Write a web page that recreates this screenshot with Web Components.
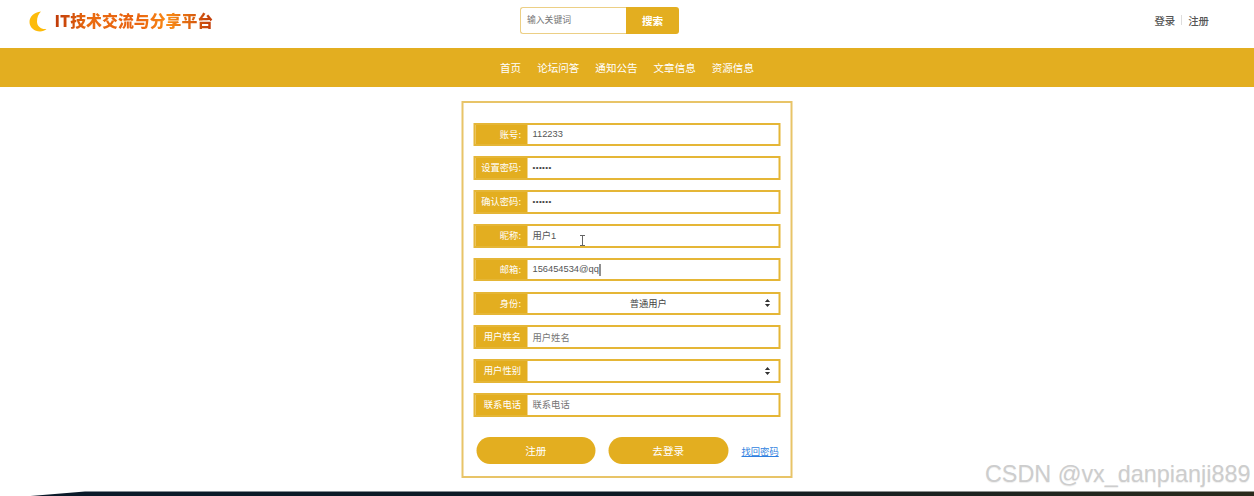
<!DOCTYPE html>
<html lang="zh">
<head>
<meta charset="utf-8">
<title>IT技术交流与分享平台</title>
<style>
  html, body { margin: 0; height: 496px; overflow: hidden; background: #fff; }
  body { font-family: "Liberation Sans", "Noto Sans CJK SC", sans-serif; position: relative; }
</style>
</head>
<body>
<site-header></site-header>
<site-nav>
  <a>首页</a><a>论坛问答</a><a>通知公告</a><a>文章信息</a><a>资源信息</a>
</site-nav>
<reg-form>
  <form-row label="账号:" value="112233"></form-row>
  <form-row label="设置密码:" value="••••••" kind="password"></form-row>
  <form-row label="确认密码:" value="••••••" kind="password"></form-row>
  <form-row label="昵称:" value="用户1" kind="hover"></form-row>
  <form-row label="邮箱:" value="156454534@qq" kind="caret"></form-row>
  <form-row label="身份:" value="普通用户" kind="select"></form-row>
  <form-row label="用户姓名" placeholder="用户姓名"></form-row>
  <form-row label="用户性别" kind="select"></form-row>
  <form-row label="联系电话" placeholder="联系电话"></form-row>
  <pill-button slot="actions">注册</pill-button>
  <pill-button slot="actions">去登录</pill-button>
  <a slot="actions" class="back">找回密码</a>
</reg-form>
<site-footer></site-footer>
<water-mark></water-mark>

<script>
const GOLD = '#e3ae20';

class SiteHeader extends HTMLElement {
    constructor() {
        super();
        this.attachShadow({mode: 'open'}).innerHTML = `
        <style>
        :host { display: flex; align-items: center; height: 47.6px; padding: 0 45px 0 29px; color: #333; }
        .logo { flex: 0 0 491px; display: flex; align-items: center; gap: 7.5px; height: 100%; }
        .logo svg { display: block; margin-top: -5px; }
        .logo b {
            font: 800 15.9px "Noto Sans CJK SC", sans-serif; line-height: 20px;
            background: linear-gradient(90deg, #bf3a08 0%, #ea6c10 22%, #e8610f 50%, #f98b16 72%, #c03c0a 100%);
            -webkit-background-clip: text; background-clip: text; color: transparent;
            margin-top: -5px;
        }
        .search { display: flex; height: 27px; margin-top: -6px; font-family: "Noto Sans CJK SC", sans-serif; }
        .search span {
            box-sizing: border-box; width: 106px; padding-left: 6px; line-height: 24px;
            font-size: 8.8px; color: #757575; border: 1px solid #eccf85; border-right: 0; border-radius: 3px 0 0 3px;
        }
        .search button {
            width: 53px; border: 0; padding: 0; background: ${GOLD}; color: #fff; font: 700 10.6px "Noto Sans CJK SC", sans-serif;
            border-radius: 0 3px 3px 0;
        }
        .user { margin-left: auto; margin-top: -7px; display: flex; align-items: center; font: 500 10.4px "Noto Sans CJK SC", sans-serif; color: #555; }
        .user i { width: 1px; height: 10px; background: #ddd; margin: 0 6px; }
        </style>
        <div class="logo">
            <svg width="18" height="21" viewBox="0 0 18 21">
                <path d="M12 0.5C5 1.5 0.5 5.5 0.5 11C0.5 16.5 5.5 20.5 11 20.5C13.5 20.5 16 19.5 17.5 18C11.5 18.5 8 15 8 10.5C8 6 9.5 3 12 0.5Z" fill="#fdbb0a"/>
            </svg>
            <b>IT技术交流与分享平台</b>
        </div>
        <div class="search"><span>输入关键词</span><button>搜索</button></div>
        <div class="user"><span>登录</span><i></i><span>注册</span></div>
        `;
    }
}
customElements.define('site-header', SiteHeader);

class SiteNav extends HTMLElement {
    constructor() {
        super();
        this.attachShadow({mode: 'open'}).innerHTML = `
        <style>
        :host {
            display: flex; justify-content: center; align-items: center; gap: 16px; height: 39.6px;
            background: ${GOLD}; color: #fff; font: 10.55px "Noto Sans CJK SC", sans-serif;
        }
        </style>
        <slot></slot>
        `;
    }
}
customElements.define('site-nav', SiteNav);

class RegForm extends HTMLElement {
    constructor() {
        super();
        this.attachShadow({mode: 'open'}).innerHTML = `
        <style>
        :host {
            display: flex; flex-direction: column; gap: 10.2px; box-sizing: border-box; width: 331px; height: 377px;
            margin: 13.8px auto 0; padding: 19.7px 10px 0; border: 2px solid #e8c468; transform: translateX(-0.5px);
        }
        .actions { display: flex; align-items: center; margin: 10.5px 0 0 3px; font-family: "Noto Sans CJK SC", sans-serif; }
        ::slotted(pill-button) { margin-right: 13px; }
        ::slotted(.back) { margin-left: 0.5px; font-size: 9.3px; color: #2f7fe0; text-decoration: underline; }
        </style>
        <slot></slot>
        <div class="actions"><slot name="actions"></slot></div>
        `;
    }
}
customElements.define('reg-form', RegForm);

class FormRow extends HTMLElement {
    connectedCallback() {
        const kind = this.getAttribute('kind') || '';
        const ph = this.getAttribute('placeholder');
        const text = ph || this.getAttribute('value') || '';
        const arrows = kind === 'select'
            ? `<svg class="arrows" width="6" height="8" viewBox="0 0 6 8"><path d="M3 0L5.6 3H0.4ZM3 8L0.4 5H5.6Z" fill="#333"/></svg>` : '';
        const caret = kind === 'caret' ? `<i class="caret"></i>` : '';
        const beam = kind === 'hover'
            ? `<svg class="beam" width="6" height="11" viewBox="0 0 6 11"><path d="M0.5 0.5H5.5M3 0.5V10.5M0.5 10.5H5.5" stroke="#666" fill="none"/></svg>` : '';
        this.attachShadow({mode: 'open'}).innerHTML = `
        <style>
        :host {
            display: flex; box-sizing: border-box; height: 23.6px; border: 2px solid #e5b636; background: #fff;
            font: 9.3px "Liberation Sans", "Noto Sans CJK SC", sans-serif; position: relative;
        }
        .label {
            flex: 0 0 52px; box-sizing: border-box; padding-right: 6px; background: ${GOLD}; color: #fff; text-align: right;
            line-height: 19.6px; font-family: "Noto Sans CJK SC", sans-serif; white-space: nowrap;
        }
        .field {
            flex: 1; display: flex; align-items: center; padding: 0 7px 0 5.5px; color: ${ph ? '#757575' : '#555'};
            font-family: "Liberation Sans", "Noto Sans CJK SC", sans-serif; white-space: nowrap;
        }
        :host([kind=select]) .text { flex: 1; text-align: center; color: #444; }
        :host([kind=password]) .text { font-size: 8px; letter-spacing: 0.4px; color: #444; }
        .text { margin-top: -1px; }
        .caret { width: 1px; height: 12px; background: #222; margin-left: 0.5px; }
        .arrows { margin-right: 1px; }
        .beam { position: absolute; left: 104.5px; top: 9px; }
        </style>
        <div class="label">${this.getAttribute('label')}</div>
        <div class="field"><span class="text">${text}</span>${caret}${arrows}</div>
        ${beam}
        `;
    }
}
customElements.define('form-row', FormRow);

class PillButton extends HTMLElement {
    constructor() {
        super();
        this.attachShadow({mode: 'open'}).innerHTML = `
        <style>
        :host {
            display: flex; justify-content: center; align-items: center; width: 119.5px; height: 26.6px; border-radius: 14px;
            background: ${GOLD}; color: #fff; font: 10.6px "Noto Sans CJK SC", sans-serif;
        }
        </style>
        <slot></slot>
        `;
    }
}
customElements.define('pill-button', PillButton);

class SiteFooter extends HTMLElement {
    constructor() {
        super();
        this.attachShadow({mode: 'open'}).innerHTML = `
        <style>
        :host {
            display: block; height: 5px; margin-top: 13.4px;
            background: linear-gradient(90deg, #0a1a2a, #0e1a24 50%, #2a2a1c);
            clip-path: polygon(26px 100%, 85px 0, 100% 0, 100% 100%);
        }
        </style>
        `;
    }
}
customElements.define('site-footer', SiteFooter);

class WaterMark extends HTMLElement {
    constructor() {
        super();
        this.attachShadow({mode: 'open'}).innerHTML = `
        <style>
        :host {
            position: absolute; right: 3.5px; top: 461px; font: 23.4px "Liberation Sans", sans-serif;
            color: #cdcdcd; text-shadow: 0 1px 1px #eee; white-space: nowrap;
        }
        </style>
        CSDN @vx_danpianji889
        `;
    }
}
customElements.define('water-mark', WaterMark);
</script>
</body>
</html>
